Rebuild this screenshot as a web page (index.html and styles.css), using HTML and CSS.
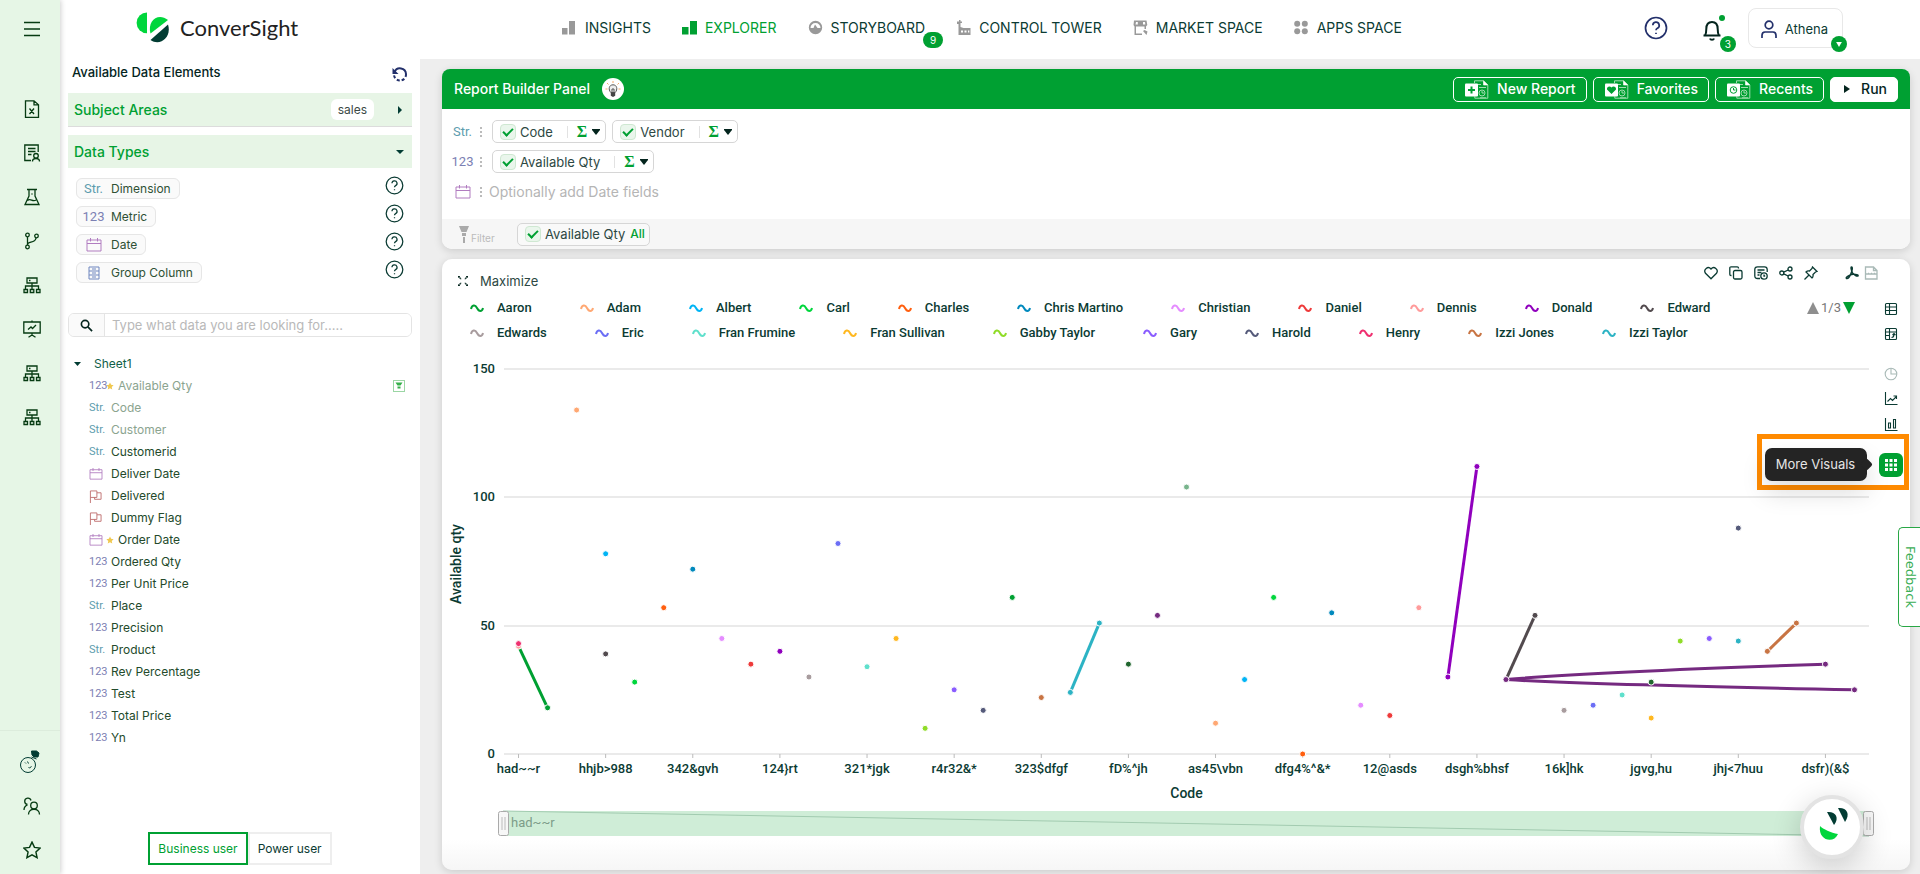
FILE: index.html
```html
<!DOCTYPE html>
<html lang="en">
<head>
<meta charset="utf-8">
<title>ConverSight Explorer</title>
<link rel="stylesheet" href="styles.css">
</head>
<body>
<svg class="sprite" aria-hidden="true">
  <symbol id="tree" viewBox="0 0 18 18"><path d="M4 2h10v5H4zM9 7v6M2.500 13v-3h13v3M1 13.500h3.500v3H1zM7.300 13.500h3.500v3H7.300zM13.500 13.500H17v3h-3.500zM6 4.500h1.500"/></symbol>
  <symbol id="help" viewBox="0 0 24 24"><circle cx="12" cy="12" r="10.500"/><path d="M8.800 9.300a3.200 3.200 0 1 1 4.600 2.900c-.9.500-1.400 1-1.400 2.100M12 16.700v1.300"/></symbol>
  <symbol id="calendar" viewBox="0 0 16 14"><path d="M1 2h14v11H1zM1 5.500h14M4.500 0v3.500M11.500 0v3.500"/></symbol>
  <symbol id="flag" viewBox="0 0 14 14"><path d="M1.500 14V1h7v7h-7M8.500 3h4.500v7H6V8"/></symbol>
  <symbol id="star" viewBox="0 0 16 16"><path d="M8 1l2.200 4.700 5 .6-3.700 3.500 1 5L8 12.300l-4.500 2.500 1-5L.8 6.300l5-.6z"/></symbol>
  <symbol id="report" viewBox="0 0 24 19"><path d="M9.500 3V.8h9L22.800 5v13.200h-13v-2M18.500.8V5h4.300M12 4.500h4M14 7.500h7M15 17.800h6" fill="none" stroke="#9fdcae"/><path d="M18.500.5L23 5h-4.500z" fill="#fff"/><circle cx="17" cy="13" r="3" fill="none" stroke="#9fdcae"/><path d="M17 11v2h2" fill="none" stroke="#9fdcae"/><rect x="0" y="3.500" width="13" height="13" rx="1" fill="#fff"/></symbol>
</svg>

<nav class="rail" aria-label="Tools">
  <button class="rail-btn menu" aria-label="Menu"><svg class="ico" viewBox="0 0 16 16"><path d="M0 1.500h16M0 8h16M0 14.500h16"/></svg></button>
  <div class="rail-list">
    <button class="rail-btn" aria-label="Excel file"><svg class="ico big" viewBox="0 0 18 18"><path d="M2.500.8h8.500l4.500 4v12.500h-13zM11 .8v4h4.500M6.500 8.500l4.500 5.500M11 8.500l-4.500 5.500"/></svg></button>
    <button class="rail-btn" aria-label="Reports"><svg class="ico big" viewBox="0 0 18 18"><path d="M8 16.500H1.800V1h13.400v7M5 4.500h7.500M5 7.500h7.500M5 10.500h3.500"/><circle cx="13" cy="11.800" r="2.300"/><path d="M9.500 17.500c0-4 7-4 7 0"/></svg></button>
    <button class="rail-btn" aria-label="Lab"><svg class="ico big" viewBox="0 0 18 18"><path d="M4 1.500h10M6 1.500v6.500L2 16.500h14L12 8V1.500M4.500 12.500c3-3 5 2 8.500-.5M8.500 6h1"/></svg></button>
    <button class="rail-btn" aria-label="Branches"><svg class="ico big" viewBox="0 0 18 18"><circle cx="4.500" cy="3" r="1.800"/><circle cx="4.500" cy="15" r="1.800"/><circle cx="13.500" cy="4" r="1.800"/><path d="M4.500 5v8M4.500 12.500c0-3.500 8-1 8.500-6.500"/></svg></button>
    <button class="rail-btn" aria-label="Hierarchy"><svg class="ico big"><use href="#tree"/></svg></button>
    <button class="rail-btn" aria-label="Presentation"><svg class="ico big" viewBox="0 0 18 18"><path d="M.8 2h16.400v11H.8zM9 .5V2M9 13v3M5.500 17.300L9 15l3.500 2.300M5 9.500L8 7l1.500 1.500L13 5"/></svg></button>
    <button class="rail-btn" aria-label="Data model"><svg class="ico big"><use href="#tree"/></svg></button>
    <button class="rail-btn" aria-label="Relations"><svg class="ico big"><use href="#tree"/></svg></button>
  </div>
  <div class="rail-foot">
    <button class="rail-btn" aria-label="Athena"><svg class="mascot" viewBox="0 0 22 24"><circle cx="9" cy="15" r="7.500"/><path d="M6 12.500l1 1M8.500 11.500l1 2M9.500 17.500c1.500.8 2.500 0 2.800-1.300"/><path class="solid" d="M12.500 1h5l2.500 2-1 4h-4l-2-2zM12.500 7l5 2"/></svg></button>
    <button class="rail-btn" aria-label="Users"><svg class="ico big" viewBox="0 0 18 18"><circle cx="11" cy="8.500" r="3.300"/><path d="M5.500 17.500c0-7 11-7 11 0M8 3.500A3.200 3.200 0 1 0 4.500 7.500M1 13c0-2.500 1.500-4.500 3.500-5.200"/></svg></button>
    <button class="rail-btn" aria-label="Starred"><svg class="ico big"><use href="#star"/></svg></button>
  </div>
</nav>

<div class="shell">
  <header class="topbar">
    <a class="logo" href="#"><svg class="logo-mark" viewBox="0 0 33 32"><path d="M11 .5v20.800A10.400 10.400 0 0 1 11 .5z" fill="#00d63c"/><path d="M14.500 21.500C11 9 22 0 32 8z" fill="#00d63c"/><path d="M32 12.500c4 13-8 22-17.500 15.500z" fill="#023c33"/></svg><span>ConverSight</span></a>
    <nav class="nav" aria-label="Main">
      <a href="#"><svg class="nav-ico" viewBox="0 0 15 15"><path d="M0 8h5.500v6.500H0zM7 1h6v13.500H7z"/></svg>INSIGHTS</a>
      <a href="#" class="active"><svg class="nav-ico" viewBox="0 0 15 15"><path d="M0 7h6.500v7.500H0zM8 1h7v13.500H8z"/></svg>EXPLORER</a>
      <a href="#"><svg class="nav-ico" viewBox="0 0 15 15"><path fill-rule="evenodd" d="M7.500.8a6.700 6.700 0 1 1 0 13.400 6.700 6.700 0 0 1 0-13.400zM2.500 8h3l1.500-3.500L9.500 8h3a5 5 0 1 0-10 0z"/></svg>STORYBOARD<span class="nav-badge">9</span></a>
      <a href="#"><svg class="nav-ico" viewBox="0 0 15 15"><path fill-rule="evenodd" d="M1 1.500h2V0h1.500v1.500H6V3H4.500v4l3 1h7v7H2.500V4H1zM5 10.500v2h2v-2zm3.500 0v2h2v-2zm3.500 0v2h1.300v-2z"/></svg>CONTROL TOWER</a>
      <a href="#"><svg class="nav-ico" viewBox="0 0 15 15"><path fill-rule="evenodd" d="M1 .5h12.500l.8 4.500-1.300 1.500V9h-1.500V6.500H3v7h6V15H1.500V6.500L.5 5zM3 2l-.5 2.500h2.300V2zm7 0v2.500h2.300L12 2z"/><path d="M10 11l1.500-1 3 1.500-1 3.500z"/></svg>MARKET SPACE</a>
      <a href="#"><svg class="nav-ico" viewBox="0 0 15 15"><circle cx="3.200" cy="3.700" r="3"/><circle cx="10.800" cy="3.700" r="3"/><circle cx="3.200" cy="11.300" r="3"/><circle cx="10.800" cy="11.300" r="3"/></svg>APPS SPACE</a>
    </nav>
    <div class="account">
      <button class="plain help-top" aria-label="Help"><svg class="ico help-lg"><use href="#help"/></svg></button>
      <button class="plain bell" aria-label="Notifications"><svg class="ico bell-ico" viewBox="0 0 20 24"><path d="M1.500 17.500h17M3 17.500c1-1.500 1.300-3.500 1.300-6.500 0-4.500 2-7 5.700-7s5.700 2.500 5.700 7c0 3 .3 5 1.300 6.500M8 20.500c.5 1.600 3.500 1.600 4 0"/></svg><span class="dot"></span><span class="round-badge">3</span></button>
      <button class="user"><svg class="ico user-ico" viewBox="0 0 18 18"><circle cx="9" cy="5" r="3.800"/><path d="M2 18v-2.500c0-2 1-3.500 3-3.500h8c2 0 3 1.500 3 3.500V18"/></svg>Athena<span class="round-badge"><svg class="mini" viewBox="0 0 8 7"><path d="M0 0h8L4 7z"/></svg></span></button>
    </div>
  </header>

  <div class="work">
    <aside class="side">
      <div class="side-head"><h2>Available Data Elements</h2><button class="plain" aria-label="Reset"><svg class="undo" viewBox="0 0 16 16"><path d="M2.500 6A6 6 0 0 1 14 8"/><path d="M14 8A6 6 0 0 1 2 9" stroke-dasharray="3 2"/><path d="M.5 2v6h6z" class="tip"/></svg></button></div>
      <button class="band"><span>Subject Areas</span><span class="tag">sales</span><svg class="tri" viewBox="0 0 8 8"><path d="M2 0l4 4-4 4z"/></svg></button>
      <button class="band low"><span>Data Types</span><svg class="tri" viewBox="0 0 8 8"><path d="M0 2h8L4 6z"/></svg></button>
      <ul class="types">
        <li><span class="type"><i class="kind str">Str.</i>Dimension</span><button class="plain" aria-label="About Dimension"><svg class="ico help-sm"><use href="#help"/></svg></button></li>
        <li><span class="type"><i class="kind num">123</i>Metric</span><button class="plain" aria-label="About Metric"><svg class="ico help-sm"><use href="#help"/></svg></button></li>
        <li><span class="type"><i class="kind"><svg class="cal"><use href="#calendar"/></svg></i>Date</span><button class="plain" aria-label="About Date"><svg class="ico help-sm"><use href="#help"/></svg></button></li>
        <li><span class="type"><i class="kind"><svg class="cabinet" viewBox="0 0 12 14"><path d="M1 1h10v12H1zM1 5h10M1 9h10M4 3h4M4 7h4M4 11h4"/></svg></i>Group Column</span><button class="plain" aria-label="About Group Column"><svg class="ico help-sm"><use href="#help"/></svg></button></li>
      </ul>
      <div class="search">
        <label for="find"><svg class="lens" viewBox="0 0 14 14"><circle cx="5.500" cy="5.500" r="4"/><path d="M8.500 8.500L13 13"/></svg></label>
        <input id="find" type="text" aria-label="Search data" placeholder="Type what data you are looking for.....">
      </div>
      <button class="plain sheet"><svg class="tri" viewBox="0 0 8 8"><path d="M1 2h7L4.500 6z"/></svg>Sheet1</button>
      <ul class="fields">
        <li class="used"><i class="num">123</i><svg class="fav"><use href="#star"/></svg>Available Qty<svg class="funnel" viewBox="0 0 12 12"><rect x=".5" y=".5" width="11" height="11"/><path d="M2.500 2.500h7L7.500 5.500h-3zM4.500 6.500h3v2h-3z"/></svg></li>
        <li class="used"><i class="str">Str.</i>Code</li>
        <li class="used"><i class="str">Str.</i>Customer</li>
        <li><i class="str">Str.</i>Customerid</li>
        <li><i><svg class="cal"><use href="#calendar"/></svg></i>Deliver Date</li>
        <li><i><svg class="flag"><use href="#flag"/></svg></i>Delivered</li>
        <li><i><svg class="flag"><use href="#flag"/></svg></i>Dummy Flag</li>
        <li><i><svg class="cal"><use href="#calendar"/></svg></i><svg class="fav"><use href="#star"/></svg>Order Date</li>
        <li><i class="num">123</i>Ordered Qty</li>
        <li><i class="num">123</i>Per Unit Price</li>
        <li><i class="str">Str.</i>Place</li>
        <li><i class="num">123</i>Precision</li>
        <li><i class="str">Str.</i>Product</li>
        <li><i class="num">123</i>Rev Percentage</li>
        <li><i class="num">123</i>Test</li>
        <li><i class="num">123</i>Total Price</li>
        <li><i class="num">123</i>Yn</li>
      </ul>
      <div class="mode"><button class="on">Business user</button><button>Power user</button></div>
    </aside>

    <main class="main">
      <section class="card builder">
        <div class="builder-head">
          <h1>Report Builder Panel</h1>
          <button class="bulb" aria-label="Tips"><svg viewBox="0 0 18 18"><path d="M9 1v2M3 3l1.500 1.500M15 3l-1.500 1.500M1.500 9h2M14.500 9h2" stroke="#f3a96a" fill="none"/><path d="M6.800 12.500C4 9.500 5 4.800 9 4.800s5 4.700 2.200 7.700z" fill="#eee" stroke="#555"/><path d="M6.800 12.500h4.400v3.300L9 17l-2.200-1.200z" fill="#444"/><path d="M8 12V9h2v3" stroke="#555" fill="none"/></svg></button>
          <div class="builder-actions">
            <button class="ghost"><svg class="rep" viewBox="0 0 24 19"><use href="#report"/><path d="M6.500 6.500v7M3 10h7" stroke="#00a032" stroke-width="2"/></svg>New Report</button>
            <button class="ghost"><svg class="rep" viewBox="0 0 24 19"><use href="#report"/><path d="M6.500 14L2 9.500C1.500 6.500 5 5.500 6.500 7.500 8 5.500 11.500 6.500 11 9.500z" fill="#00a032"/></svg>Favorites</button>
            <button class="ghost"><svg class="rep" viewBox="0 0 24 19"><use href="#report"/><circle cx="6.500" cy="10" r="3.300" fill="none" stroke="#00a032"/><path d="M6.500 8v2h2" fill="none" stroke="#00a032"/></svg>Recents</button>
            <button class="run"><svg class="tri" viewBox="0 0 8 8"><path d="M1 0l6 4-6 4z"/></svg>Run</button>
          </div>
        </div>
        <div class="slots">
          <div class="slot"><i class="kind str">Str.</i><span class="grip"></span>
            <div class="chip"><input type="checkbox" id="c1" checked><label for="c1">Code</label><button aria-label="Aggregate Code">Σ<svg class="caret" viewBox="0 0 8 6"><path d="M0 0h8v1L4 6 0 1z"/></svg></button></div>
            <div class="chip"><input type="checkbox" id="c2" checked><label for="c2">Vendor</label><button aria-label="Aggregate Vendor">Σ<svg class="caret" viewBox="0 0 8 6"><path d="M0 0h8v1L4 6 0 1z"/></svg></button></div>
          </div>
          <div class="slot"><i class="kind num">123</i><span class="grip"></span>
            <div class="chip"><input type="checkbox" id="c3" checked><label for="c3">Available Qty</label><button aria-label="Aggregate Available Qty">Σ<svg class="caret" viewBox="0 0 8 6"><path d="M0 0h8v1L4 6 0 1z"/></svg></button></div>
          </div>
          <div class="slot"><i class="kind"><svg class="cal"><use href="#calendar"/></svg></i><span class="grip"></span><span class="hint">Optionally add Date fields</span></div>
        </div>
        <div class="filters">
          <span class="filter-name"><svg viewBox="0 0 10 17"><path d="M0 0h10L7.500 6h-5zM3 7h4v3H3zM4 11h2v6H4z"/></svg>Filter</span>
          <div class="chip flat"><input type="checkbox" id="c4" checked><label for="c4">Available Qty</label><b>All</b></div>
        </div>
      </section>

      <section class="card result">
        <div class="result-head">
          <button class="plain maximize"><svg viewBox="0 0 11 11"><path d="M.5.5l3 3M10.500.5l-3 3M.5 10.500l3-3M10.500 10.500l-3-3" stroke-dasharray="1.500 .5"/><path d="M0 .7h2M9 .7h2M0 10.300h2M9 10.300h2"/></svg>Maximize</button>
          <div class="acts">
            <button class="plain" aria-label="Like"><svg class="ico" viewBox="0 0 14 14"><path d="M7 12.800L1.500 7.300C-1 3.500 4 -.5 7 3c3-3.500 8 .5 5.500 4.300z"/></svg></button>
            <button class="plain" aria-label="Copy"><svg class="ico" viewBox="0 0 14 14"><rect x="4.500" y="4.500" width="8.500" height="8.500" rx="1.500"/><path d="M2.500 9.500H2A1.200 1.200 0 0 1 .8 8.300V2A1.200 1.200 0 0 1 2 .8h6.300A1.200 1.200 0 0 1 9.500 2v.5"/></svg></button>
            <button class="plain" aria-label="Schedule"><svg class="ico" viewBox="0 0 14 14"><path d="M6 12.500H3.500c-2 0-2.700-1-2.700-2.700V3.500c0-2 1-2.700 2.700-2.700h7c2 0 2.700 1 2.700 2.700V6M3.500 4h7M3.500 6.500h4M3.500 9h2"/><circle cx="10" cy="10" r="3.200"/><path d="M10 8.500V10h1.200"/></svg></button>
            <button class="plain" aria-label="Share"><svg class="ico" viewBox="0 0 14 14"><circle cx="2.800" cy="7" r="2"/><circle cx="11" cy="3" r="2"/><circle cx="11" cy="11" r="2"/><path d="M4.700 6.200L9.200 4M4.700 7.800L9.200 10"/></svg></button>
            <button class="plain" aria-label="Pin"><svg class="ico" viewBox="0 0 14 14"><path d="M8.500 1L13 5.500l-1.500.5L9 8.500c.3 1.700 0 2.700-1 3.500L2 6c1-1 2-1.300 3.500-1L8 2.500zM5 9l-4.500 4.500"/></svg></button>
            <span class="split"></span>
            <button class="plain" aria-label="Export PDF"><svg class="ico pdf" viewBox="0 0 14 14"><path d="M6.500 1c1.500 0 .5 4-.5 6.500C5 10 3 13 1.500 12.500 0 11.500 5 8.500 8 8.300c3-.2 5.500.5 5 1.500s-4-.8-5.500-3C6.500 5 5.500 1 6.500 1z"/></svg></button>
            <button class="plain" aria-label="Export CSV" disabled><svg class="ico" viewBox="0 0 14 14"><path d="M1.500 13V1h8L13 4.500V13zM9.500 1v3.500H13M1.500 8H13M4 7.500h1M7 7.500h1M10 7.500h1"/></svg></button>
          </div>
        </div>
        <div class="result-body">
          <div class="plot">
            <div class="legend">
              <ul id="legend"></ul>
              <div class="pager"><svg viewBox="0 0 12 12"><path d="M6 0l6 12H0z" fill="#8e8e8e"/></svg>1/3<svg viewBox="0 0 12 12"><path d="M0 0h12L6 12z" fill="#00a032"/></svg></div>
            </div>
            <svg id="chart" role="img" aria-label="Available qty by Code"></svg>
          </div>
          <div class="visuals">
            <button class="plain" aria-label="Table"><svg class="ico" viewBox="0 0 14 14"><rect x="1.500" y="1.500" width="11" height="11" rx="1"/><path d="M1.500 5h11M1.500 8.500h11M5.500 1.500v11"/></svg></button>
            <button class="plain" aria-label="Pivot"><svg class="ico" viewBox="0 0 14 14"><rect x="1.500" y="1.500" width="11" height="11" rx="1"/><path d="M1.500 5h11M5.500 1.500v11M1.500 8.500h4M7.500 10.500c2 0 2.500-.7 2.500-3M8.500 8L10 6.500 11.500 8"/></svg></button>
            <span class="space"></span>
            <button class="plain" aria-label="Pie chart" disabled><svg class="ico" viewBox="0 0 14 14"><circle cx="7" cy="7" r="5.800"/><path d="M7 1.200V7h5.800"/></svg></button>
            <button class="plain" aria-label="Line chart"><svg class="ico" viewBox="0 0 14 14"><path d="M1.500 0v12.500h12M3.500 9.500l3-3 2 2 4-4M9.500 4h3v3"/></svg></button>
            <button class="plain" aria-label="Bar chart"><svg class="ico" viewBox="0 0 14 14"><path d="M1.500 1v12.500h12M4.500 6h2v5h-2zM9.500 2.500h2V11h-2z"/></svg></button>
            <div class="callout">
              <span class="tooltip" role="tooltip">More Visuals</span>
              <button class="more" aria-label="More Visuals"><svg viewBox="0 0 12 12"><path d="M0 0h3v3H0zM4.500 0h3v3h-3zM9 0h3v3H9zM0 4.500h3v3H0zM4.500 4.500h3v3h-3zM9 4.500h3v3H9zM0 9h3v3H0zM4.500 9h3v3h-3zM9 9h3v3H9z"/></svg></button>
            </div>
          </div>
        </div>
      </section>
    </main>
  </div>
</div>
<button class="feedback">Feedback</button>
<button class="chat" aria-label="Chat with Athena"><svg viewBox="0 0 56 56"><path d="M23 13c8-1 13 5 7 13z" fill="#023c33"/><path d="M34 9c8-1 13 5 7 14z" fill="#023c33"/><path d="M16 27c3 3 11 7 18 8-4 10-20 7-18-8z" fill="#00d63c"/></svg></button>
<script src="chart.js"></script>
</body>
</html>
```

FILE: styles.css
```css
*, *::before, *::after { box-sizing: border-box; }
body { margin: 0; display: flex; min-height: 100vh; font: 12px/16px Inter, "Open Sans", sans-serif; color: #0b3b33; background: #efefef; overflow: hidden; }
ul { list-style: none; margin: 0; padding: 0; }
h1, h2 { margin: 0; font-weight: 500; }
button { font: inherit; color: inherit; cursor: pointer; }
a { color: inherit; text-decoration: none; }
i { font-style: normal; }
.sprite { position: absolute; width: 0; height: 0; }
.plain { display: flex; align-items: center; background: none; border: 0; padding: 0; }
.ico { display: block; width: 16px; height: 16px; fill: none; stroke: currentColor; stroke-width: 1.3; }
.big { width: 18px; height: 18px; }

/* icon rail */
.rail { flex: none; width: 60px; display: flex; flex-direction: column; background: #e6f6e6; color: #063b12; box-shadow: 1px 0 5px #00000030; z-index: 2; padding-left: 4px; }
.rail-btn { display: flex; align-items: center; justify-content: center; width: 56px; height: 44px; border: 0; padding: 0; background: none; }
.menu { margin: 7px 0 36px; }
.rail-foot { margin: auto 0 0 -4px; padding: 9px 0 2px 4px; border-top: 1px solid #dcecdc; }
.mascot { width: 22px; height: 24px; margin-right: 4px; fill: none; stroke: #023c33; }
.mascot .solid { fill: #023c33; }

.shell { flex: 1; min-width: 0; display: flex; flex-direction: column; }

/* top bar */
.topbar { display: flex; height: 59px; background: #fff; padding: 0 77px 0 76px; }
.logo { display: flex; align-items: center; gap: 11px; width: 426px; padding-bottom: 4px; font: 22px/30px Lato, sans-serif; color: #222; }
.logo-mark { width: 33px; height: 32px; }
.nav { display: flex; gap: 31px; align-items: center; font-size: 14px; padding-bottom: 4px; white-space: nowrap; }
.nav a { position: relative; display: flex; align-items: center; gap: 8px; }
.nav-ico { width: 15px; height: 15px; fill: #999; }
.nav .active { color: #00a032; }
.active .nav-ico { fill: #00a032; }
.nav-badge { position: absolute; right: -18px; top: 12px; width: 20px; height: 16px; border-radius: 8px; background: #00a032; color: #fff; font-size: 10px; text-align: center; }
.account { margin-left: auto; display: flex; align-items: center; padding-bottom: 3px; }
.help-lg { width: 24px; height: 24px; color: #23306b; stroke-width: 1.7; }
.help-top { margin-right: 34px; }
.bell { position: relative; margin-right: 26px; padding-top: 4px; }
.bell-ico { width: 20px; height: 24px; stroke-width: 2; color: #04251e; }
.dot { position: absolute; right: -3px; top: 1px; width: 6px; height: 6px; border-radius: 3px; background: #00a032; }
.round-badge { position: absolute; right: -14px; bottom: -10px; width: 16px; height: 16px; border-radius: 8px; background: #00a032; color: #fff; font-size: 10px; display: grid; place-items: center; }
.user { position: relative; display: flex; align-items: center; gap: 7px; height: 40px; padding: 2px 14px 0 11px; background: #fff; border: 1px solid #e8e8e8; border-radius: 8px; font-size: 13px; }
.user-ico { width: 18px; height: 18px; color: #23306b; stroke-width: 1.7; }
.user .round-badge { right: -5px; bottom: -5px; }
.mini { width: 6px; height: 5px; fill: #fff; }

.work { flex: 1; display: flex; min-height: 0; }

/* data elements */
.side { flex: none; width: 360px; display: flex; flex-direction: column; padding: 0 8px 9px; background: #fff; }
.side-head { display: flex; justify-content: space-between; align-items: center; padding: 0 4px 8px; height: 34px; }
.side-head h2 { font-size: 13px; color: #04251e; }
.undo { width: 16px; height: 16px; margin-top: 4px; fill: none; stroke: #23306b; stroke-width: 2; }
.undo .tip { fill: #23306b; stroke: none; }
.band { display: flex; align-items: center; justify-content: space-between; height: 34px; padding: 0 8px 0 6px; border: 0; border-bottom: 1px solid #dcdcdc; background: #e7f5e6; color: #00a032; font-size: 14px; font-weight: 500; text-align: left; }
.band.low { margin-top: 8px; height: 33px; border: 0; }
.tri { width: 8px; height: 8px; fill: #023c33; }
.tag { margin-left: auto; margin-right: 22px; padding: 2px 7px; border-radius: 6px; background: #fff; color: #3b4a46; font-size: 12px; font-weight: 400; line-height: 17px; }
.types { padding: 8px 8px 0; }
.types li { display: flex; justify-content: space-between; align-items: flex-start; height: 28px; }
.type { display: flex; align-items: center; height: 21px; margin-top: 2px; padding: 0 8px 0 7px; border: 1px solid #e6e6e6; border-radius: 6px; background: #fafafa; color: #2f5135; }
.kind { flex: none; width: 19px; margin-right: 8px; font: 13px/16px Roboto, sans-serif; display: flex; justify-content: center; }
.str { color: #5d9cae; }
.num { color: #7c80b3; }
.cal { width: 16px; height: 14px; fill: none; stroke: #b17cc0; }
.flag { width: 14px; height: 14px; fill: none; stroke: #c07070; }
.cabinet { width: 12px; height: 14px; fill: none; stroke: #6f86bf; }
.help-sm { width: 19px; height: 19px; stroke-width: 1.6; }
.search { display: flex; height: 24px; margin-top: 25px; border: 1px solid #e4e4e4; border-radius: 6px; overflow: hidden; }
.search label { flex: none; width: 36px; display: grid; place-items: center; background: #fafafa; border-right: 1px solid #e4e4e4; }
.lens { width: 13px; height: 13px; fill: none; stroke: #04251e; stroke-width: 1.8; }
.search input { flex: 1; min-width: 0; border: 0; outline: 0; padding: 0 7px; font: 13px/16px Inter, sans-serif; color: #333; }
.search input::placeholder { color: #b9b9b9; }
.sheet { gap: 13px; margin: 19px 0 3px 5px; color: #0f6048; }
.fields { padding: 0 7px 0 21px; }
.fields li { display: flex; align-items: center; height: 22px; color: #234a2b; }
.fields i { flex: none; width: 14px; margin-right: 8px; font: 11px/16px Roboto, sans-serif; white-space: nowrap; }
.fields .num, .fields .str { width: 17px; margin-right: 5px; }
.fields .cal { display: block; width: 14px; height: 12px; }
.fields .flag { display: block; width: 13px; height: 13px; }
.fav { flex: none; width: 8px; height: 8px; margin: 0 4px 0 -5px; fill: #f0c84f; }
.fields .used { color: #8ba48f; }
.used .num { color: #7c80b3; }
.funnel { width: 12px; height: 12px; margin-left: auto; fill: #35b04a; }
.funnel rect { fill: #fff; stroke: #9bd6a4; }
.mode { display: flex; justify-content: center; margin-top: auto; }
.mode button { height: 33px; padding: 0 8px; background: #fff; border: 2px solid #eee; font-size: 12px; }
.mode .on { border-color: #00a032; color: #00a032; }

/* main column */
.main { flex: 1; min-width: 0; display: flex; flex-direction: column; gap: 10px; padding: 10px 10px 4px 22px; background: #eee; }
.card { background: #fff; border-radius: 10px; box-shadow: 0 2px 8px #00000026; }
.builder-head { display: flex; align-items: center; height: 40px; padding: 0 12px; border-radius: 8px 8px 0 0; background: #00a032; color: #fff; }
.builder-head h1 { font-size: 14px; }
.bulb { width: 22px; height: 22px; margin-left: 12px; padding: 2px; border: 0; border-radius: 11px; background: #fff; }
.bulb svg { display: block; width: 18px; height: 18px; }
.builder-actions { margin-left: auto; display: flex; gap: 6px; font-size: 14px; font-weight: 500; }
.ghost, .run { display: flex; align-items: center; justify-content: center; height: 25px; padding: 0 10px 0 11px; border: 1px solid #fff; border-radius: 5px; background: none; }
.rep { width: 24px; height: 19px; margin-right: 8px; fill: none; }
.run { padding: 0 10px 0 12px; gap: 10px; background: #fff; color: #04251e; }
.run .tri { fill: #04251e; }
.slots { padding: 11px 11px 0; height: 110px; }
.slot { display: flex; align-items: center; height: 23px; margin-bottom: 7px; }
.slot .kind { margin-right: 8px; }
.grip { width: 2px; height: 10px; margin-right: 10px; background: repeating-linear-gradient(#bbb 0 2px, #fff 2px 4px); }
.hint { margin-left: -3px; font-size: 14px; color: #b5b5b5; }
.chip { display: flex; align-items: center; height: 23px; margin-right: 6px; padding-left: 7px; border: 1px solid #d6d6d6; border-radius: 5px; font-size: 13px; background: #fff; color: #2d4843; }
.chip input { appearance: none; position: relative; width: 16px; height: 16px; margin: 0 4px 0 0; border: 1px solid #cfe8d2; border-radius: 4px; background: #eaf6ec; }
.chip input:checked::before { content: ""; position: absolute; left: 2px; top: 3px; width: 10px; height: 6px; border: solid #00a032; border-width: 0 0 2px 2px; transform: rotate(-45deg); }
.chip button { display: flex; align-items: center; gap: 5px; height: 12px; margin-left: 14px; padding: 0 5px 0 9px; border: 0; border-left: 1px solid #e2e2e2; background: none; color: #00a032; font: 700 16px/12px "Liberation Serif", serif; }
.caret { width: 8px; height: 6px; fill: #04251e; }
.filters { display: flex; align-items: center; height: 30px; padding-left: 17px; border-radius: 0 0 10px 10px; background: #f6f6f6; }
.filter-name { display: flex; width: 58px; gap: 2px; align-items: flex-end; color: #bbb; font-size: 10px; line-height: 10px; }
.filter-name svg { width: 10px; height: 17px; fill: #aaa; }
.flat { background: #f9f9f9; }
.flat b { margin: 0 4px 0 5px; font-size: 12px; font-weight: 500; color: #00a032; }

/* result card */
.result { flex: 1; display: flex; flex-direction: column; background: linear-gradient(#fff 95%, #f6f6f6); }
.result-head { display: flex; justify-content: space-between; padding: 6px 32px 0 16px; height: 36px; }
.maximize { gap: 12px; height: 32px; font-size: 13px; color: #2d4843; }
.maximize svg { width: 10px; height: 10px; fill: none; stroke: #04251e; stroke-width: 1.5; }
.acts { display: flex; gap: 11px; height: 16px; }
.acts .ico, .visuals .ico { width: 14px; height: 14px; }
.acts .split { width: 5px; }
.acts button:last-child { margin-left: -6px; }
.acts .pdf { stroke-width: 1.5; }
button:disabled { opacity: .35; }
.result-body { display: flex; flex: 1; }
.plot { flex: 1; min-width: 0; display: flex; flex-direction: column; }
.legend { display: flex; justify-content: space-between; height: 55px; padding: 0 23px 0 28px; }
#legend { display: flex; flex-wrap: wrap; align-content: flex-start; column-gap: 48px; width: 1280px; font: 500 13px/25px Roboto, sans-serif; }
#legend li { display: flex; align-items: center; gap: 13px; white-space: nowrap; }
#legend svg { width: 14px; height: 10px; fill: none; stroke-width: 2; }
.pager { display: flex; align-items: center; gap: 2px; height: 25px; color: #777; font: 13px/16px Roboto, sans-serif; }
.pager svg { width: 12px; height: 12px; }
#chart { display: block; width: 100%; height: 500px; font: 500 13px Roboto, sans-serif; fill: #0b3b33; }
.visuals { flex: none; width: 32px; padding: 7px 7px 0 0; display: flex; flex-direction: column; align-items: center; gap: 11px; }
.visuals .ico { stroke-width: 1.1; }
.visuals .space { height: 4px; }
.callout { position: relative; margin-top: 11px; }
.callout::before { content: ""; position: absolute; left: -122px; top: -19px; width: 152px; height: 56px; border: 5px solid #ff8a00; }
.more { position: relative; display: grid; place-items: center; width: 24px; height: 24px; padding: 0; border: 0; border-radius: 6px; background: #00a032; }
.more svg { width: 12px; height: 12px; fill: #fff; }
.tooltip { position: absolute; right: 36px; top: -5px; width: 102px; height: 33px; border-radius: 7px; background: #242424; color: #e6e6e6; font-size: 13px; line-height: 33px; text-align: center; white-space: nowrap; box-shadow: 0 12px 24px #00000022; }
.tooltip::after { content: ""; position: absolute; right: -4px; top: 12px; width: 9px; height: 9px; background: #242424; transform: rotate(45deg); border-radius: 2px; }

.feedback { position: fixed; right: 0; top: 527px; width: 22px; height: 100px; padding: 0; border: 1px solid #28a745; border-right: 0; border-radius: 5px 0 0 5px; background: #fff; color: #3aae55; writing-mode: vertical-rl; font: 13px/20px "DejaVu Sans", sans-serif; }
.chat { position: fixed; right: 56px; bottom: 15px; width: 64px; height: 64px; padding: 0; border: 4px solid #e3e3e3; border-radius: 32px; background: #fff; box-shadow: 0 8px 30px #00000030; }
.chat svg { display: block; width: 56px; height: 56px; }
```

FILE: chart.js
```js
const C = {
  green: '#00a032', peach: '#ffa873', sky: '#00b4f5', lime: '#00d63c', orange: '#ff5f0f', blue: '#0089bd',
  pink: '#e58cff', red: '#ee3a3a', salmon: '#ff9b9b', purple: '#9000bd', dark: '#524a4e', gray: '#a89c9e',
  indigo: '#6b6ef5', aqua: '#5fe0cc', amber: '#ffb820', leaf: '#90dc28', violet: '#8a5cff', slate: '#555a7a',
  rose: '#ef3070', brown: '#c87443', teal: '#2cb3c4', forest: '#20662e', plum: '#752a80', sage: '#78b48c'
};
const names = [
  ['Aaron', C.green], ['Adam', C.peach], ['Albert', C.sky], ['Carl', C.lime], ['Charles', C.orange],
  ['Chris Martino', C.blue], ['Christian', C.pink], ['Daniel', C.red], ['Dennis', C.salmon], ['Donald', C.purple],
  ['Edward', C.dark], ['Edwards', C.gray], ['Eric', C.indigo], ['Fran Frumine', C.aqua], ['Fran Sullivan', C.amber],
  ['Gabby Taylor', C.leaf], ['Gary', C.violet], ['Harold', C.slate], ['Henry', C.rose], ['Izzi Jones', C.brown], ['Izzi Taylor', C.teal]
];
document.getElementById('legend').innerHTML = names.map(([n, c]) =>
  `<li><svg viewBox="0 0 14 10"><path d="M1 6C2 2 5 1 7 5s5 4 6 0" stroke="${c}"/></svg>${n}</li>`).join('');

const labels = ['had~~r', 'hhjb>988', '342&gvh', '124}rt', '321*jgk', 'r4r32&*', '323$dfgf', 'fD%^jh', 'as45\\vbn',
  'dfg4%^&*', '12@asds', 'dsgh%bhsf', '16k]hk', 'jgvg,hu', 'jhj<7huu', 'dsfr)(&$'];
const points = [
  [0, 42, C.salmon], [0, 43, C.rose], [1, 18, C.green], [2, 134, C.peach], [3, 78, C.sky], [3, 39, C.dark], [4, 28, C.lime],
  [5, 57, C.orange], [6, 72, C.blue], [7, 45, C.pink], [8, 35, C.red], [9, 40, C.purple], [10, 30, C.gray],
  [11, 82, C.indigo], [12, 34, C.aqua], [13, 45, C.amber], [14, 10, C.leaf], [15, 25, C.violet], [16, 17, C.slate],
  [17, 61, C.green], [18, 22, C.brown], [19, 24, C.teal], [20, 51, C.teal], [21, 35, C.forest], [22, 54, C.plum],
  [23, 104, C.sage], [24, 12, C.peach], [25, 29, C.sky], [26, 61, C.lime], [27, 0, C.orange], [28, 55, C.blue],
  [29, 19, C.pink], [30, 15, C.red], [31, 57, C.salmon], [32, 30, C.purple], [33, 112, C.purple], [34, 29, C.plum],
  [35, 54, C.dark], [36, 17, C.gray], [37, 19, C.indigo], [38, 23, C.aqua], [39, 14, C.amber], [39, 28, C.forest],
  [40, 44, C.leaf], [41, 45, C.violet], [42, 44, C.teal], [42, 88, C.slate], [43, 40, C.brown], [44, 51, C.brown],
  [45, 35, C.plum], [46, 25, C.plum]
];
const lines = [
  [0, 42, 1, 18, C.green], [19, 24, 20, 51, C.teal], [32, 30, 33, 112, C.purple], [34, 29, 35, 54, C.dark],
  [43, 40, 44, 51, C.brown], [34, 29, 45, 35, C.plum, 32], [34, 29, 46, 25, C.plum, 27]
];
const esc = s => s.replace(/&/g, '&amp;').replace(/</g, '&lt;');

function draw() {
  const svg = document.getElementById('chart');
  const right = svg.clientWidth - 9, left = 62, base = 404;
  const step = (right - left) / 47;
  const x = i => left + step * (i + 0.5);
  const y = v => base - v * 2.567;
  let s = '';
  for (const v of [0, 50, 100, 150]) {
    const gy = Math.round(y(v));
    s += `<path d="M${left} ${gy}H${right}" stroke="#e3e3e3" stroke-width="1.5"/><text x="53" y="${gy + 4}" text-anchor="end">${v}</text>`;
  }
  labels.forEach((t, i) => {
    s += `<path d="M${x(i * 3)} ${base}v4" stroke="#bbb"/><text x="${x(i * 3)}" y="423" text-anchor="middle">${esc(t)}</text>`;
  });
  for (const [a, b, c, d, col, via] of lines) {
    const mid = via ? `Q${x(a + 3)} ${y(via)} ` : 'L';
    s += `<path d="M${x(a)} ${y(b)}${mid}${x(c)} ${y(d)}" fill="none" stroke="${col}" stroke-width="3"/>`;
  }
  for (const [i, v, col] of points) {
    s += `<circle cx="${x(i)}" cy="${y(v)}" r="3" fill="${col}" stroke="#fff" stroke-width="1"/>`;
  }
  s += `<text x="${(left + right) / 2}" y="448" text-anchor="middle" font-size="14">Code</text>`;
  s += `<text transform="translate(19 214) rotate(-90)" text-anchor="middle" font-size="14">Available qty</text>`;
  s += `<rect x="61" y="461" width="${right - 61}" height="25" fill="#cfedd7"/><path d="M61 461L${right} 486" stroke="#a2cbb0"/>`;
  s += `<text x="69" y="477" font-weight="400" fill="#7d9c89">had~~r</text>`;
  for (const hx of [56.5, right - 5.5]) {
    s += `<rect x="${hx}" y="461.5" width="10" height="24" rx="2" fill="#f7f7f7" stroke="#aaa"/><path d="M${hx + 3.5} 467v13M${hx + 6.5} 467v13" stroke="#bbb"/>`;
  }
  svg.innerHTML = s;
}
draw();
window.addEventListener('resize', draw);
```
